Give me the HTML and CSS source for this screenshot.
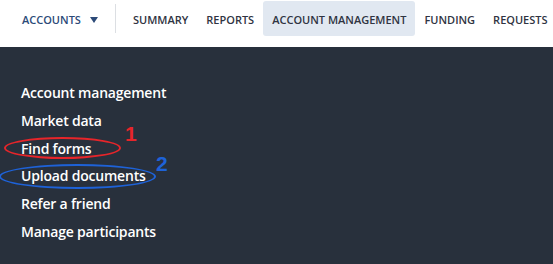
FILE: index.html
```
<!DOCTYPE html>
<html>
<head>
<meta charset="utf-8">
<link rel="stylesheet" href="styles.css">
</head>
<body>
<header class="topbar">
  <div class="accounts">ACCOUNTS <span class="caret"></span></div>
  <div class="sep"></div>
  <nav class="tabs">
    <a class="tab">SUMMARY</a>
    <a class="tab">REPORTS</a>
    <a class="tab active">ACCOUNT MANAGEMENT</a>
    <a class="tab">FUNDING</a>
    <a class="tab">REQUESTS</a>
  </nav>
</header>
<main class="panel">
  <ul class="menu">
    <li>Account management</li>
    <li>Market data</li>
    <li>Find forms</li>
    <li>Upload documents</li>
    <li>Refer a friend</li>
    <li>Manage participants</li>
  </ul>
  <div class="ring ring-red"></div>
  <div class="num num-red">1</div>
  <div class="ring ring-blue"></div>
  <div class="num num-blue">2</div>
</main>
</body>
</html>
```
FILE: styles.css
```
* { box-sizing: border-box; }
html, body { margin: 0; padding: 0; }
body {
  width: 553px;
  height: 264px;
  overflow: hidden;
  font-family: "Open Sans", "Liberation Sans", sans-serif;
  background: #28303c;
}
.topbar {
  height: 47px;
  background: #ffffff;
  display: flex;
  align-items: flex-start;
  white-space: nowrap;
}
.accounts {
  font-size: 11px;
  font-weight: 600;
  color: #2c4a78;
  padding: 12px 0 0 22px;
  display: flex;
  align-items: center;
  gap: 6px;
  width: 115px;
  flex: none;
}
.caret {
  width: 0; height: 0;
  border-left: 4px solid transparent;
  border-right: 4px solid transparent;
  border-top: 6px solid #2c4a78;
  margin-left: 3px;
}
.sep {
  width: 1px;
  height: 29px;
  margin-top: 4px;
  background: #dcdfe3;
  flex: none;
}
.tabs {
  display: flex;
  margin-left: 8px;
  margin-top: 1px;
}
.tab {
  font-size: 11px;
  font-weight: 600;
  color: #2f3442;
  padding: 11px 9px 0;
  height: 35px;
  border-radius: 3px;
  flex: none;
}
.tab.active { background: #e1e8f1; }
.panel {
  position: relative;
  height: 217px;
}
.menu {
  list-style: none;
  margin: 0;
  padding: 32px 0 0 21px;
}
.menu li {
  color: #ffffff;
  font-size: 14px;
  font-weight: 600;
  line-height: 27.8px;
  letter-spacing: -0.2px;
}
.ring {
  position: absolute;
  border-radius: 50%;
}
.ring-red {
  left: 4px; top: 90px;
  width: 117px; height: 22px;
  border: 2.5px solid #e6252a;
}
.ring-blue {
  left: -1px; top: 117px;
  width: 157px; height: 25px;
  border: 2.5px solid #1e62d8;
}
.num {
  position: absolute;
  font-family: "Liberation Sans", sans-serif;
  font-weight: 700;
  font-size: 21px;
  line-height: 1;
}
.num-red { left: 125px; top: 76px; color: #e6252a; }
.num-blue { left: 156px; top: 106px; color: #1e62d8; }
```
